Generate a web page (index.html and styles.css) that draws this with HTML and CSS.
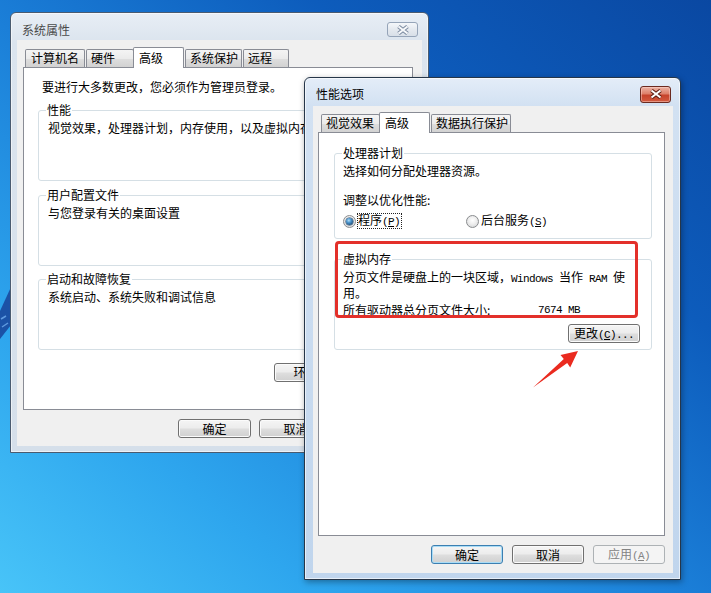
FILE: index.html
```html
<!DOCTYPE html>
<html lang="zh-CN">
<head>
<meta charset="utf-8">
<title>性能选项</title>
<link rel="stylesheet" href="styles.css">
</head>
<body>
<div class="desktop">
  <svg class="logo-piece" width="12" height="60" viewBox="0 0 12 60">
    <polygon points="0,28 11,4 11,42 0,56" fill="#1b52a6"/>
    <path d="M1 36 L6 33 M2 44 L8 40" stroke="#5f9be0" stroke-width="1.5"/>
  </svg>

  <div class="win win-back">
    <div class="titlebar">
      <span class="title">系统属性</span>
      <span class="close close-inactive">
        <svg width="14" height="10" viewBox="0 0 14 10"><path d="M2.5 1.5 L11.5 8.5 M11.5 1.5 L2.5 8.5" stroke="#7d8ca2" stroke-width="4"/><path d="M2.5 1.5 L11.5 8.5 M11.5 1.5 L2.5 8.5" stroke="#f7f9fb" stroke-width="2"/></svg>
      </span>
    </div>
    <div class="client">
      <div class="tabs tabs-back">
        <div class="tab w60 first">计算机名</div>
        <div class="tab w48">硬件</div>
        <div class="tab sel">高级</div>
        <div class="tab w57">系统保护</div>
        <div class="tab w46">远程</div>
      </div>
      <div class="panel panel-back">
        <div class="line intro">要进行大多数更改，您必须作为管理员登录。</div>
        <div class="group bg bg1">
          <div class="glabel">性能</div>
          <div class="line gtext">视觉效果，处理器计划，内存使用，以及虚拟内存</div>
        </div>
        <div class="group bg bg2">
          <div class="glabel">用户配置文件</div>
          <div class="line gtext">与您登录有关的桌面设置</div>
        </div>
        <div class="group bg bg3">
          <div class="glabel">启动和故障恢复</div>
          <div class="line gtext">系统启动、系统失败和调试信息</div>
        </div>
        <div class="envrow"><button class="btn env">环境变量<span class="m">(<u>N</u>)...</span></button></div>
      </div>
      <div class="btnbar bar-back">
        <button class="btn">确定</button>
        <button class="btn">取消</button>
        <button class="btn">应用<span class="m">(<u>A</u>)</span></button>
      </div>
    </div>
  </div>

  <div class="win win-front">
    <div class="titlebar">
      <span class="title">性能选项</span>
      <span class="close close-active">
        <svg width="14" height="10" viewBox="0 0 14 10"><path d="M2.5 1.5 L11.5 8.5 M11.5 1.5 L2.5 8.5" stroke="#5b1c12" stroke-width="4"/><path d="M2.5 1.5 L11.5 8.5 M11.5 1.5 L2.5 8.5" stroke="#ffffff" stroke-width="2"/></svg>
      </span>
    </div>
    <div class="client">
      <div class="tabs tabs-front">
        <div class="tab w59 first">视觉效果</div>
        <div class="tab sel">高级</div>
        <div class="tab w80">数据执行保护</div>
      </div>
      <div class="panel panel-front">
        <div class="group fg1">
          <div class="glabel">处理器计划</div>
          <div class="line gtext">选择如何分配处理器资源。</div>
          <div class="line gtext adjust">调整以优化性能:</div>
          <div class="radios">
            <div class="radio-item ri1"><span class="radio on"></span><span class="rlabel focus">程序<span class="m">(<u>P</u>)</span></span></div>
            <div class="radio-item"><span class="radio"></span><span class="rlabel">后台服务<span class="m">(<u>S</u>)</span></span></div>
          </div>
        </div>
        <div class="group fg2">
          <div class="glabel">虚拟内存</div>
          <div class="gtext para">分页文件是硬盘上的一块区域，<span class="m">Windows </span>当作<span class="m"> RAM </span>使用。</div>
          <div class="line gtext size-row"><span class="size-label">所有驱动器总分页文件大小:</span><span class="m">7674 MB</span></div>
          <div class="changerow"><button class="btn">更改<span class="m">(<u>C</u>)...</span></button></div>
        </div>
      </div>
      <div class="btnbar bar-front">
        <button class="btn default">确定</button>
        <button class="btn">取消</button>
        <button class="btn disabled">应用<span class="m">(<u>A</u>)</span></button>
      </div>
    </div>
  </div>

  <div class="redbox"></div>
  <svg class="arrow" width="711" height="593" viewBox="0 0 711 593">
    <polygon points="578,351 560.5,355 563.8,359 533,387.5 567.2,363 570.2,367.5" fill="#ea2a1f"/>
  </svg>
</div>
</body>
</html>
```

FILE: styles.css
```css
* { box-sizing: border-box; }

html, body {
  margin: 0;
  padding: 0;
}

body {
  font-family: "Noto Sans CJK SC", "Noto Sans", sans-serif;
  font-size: 12px;
  color: #000;
}

.desktop {
  position: relative;
  width: 711px;
  height: 593px;
  overflow: hidden;
  background: linear-gradient(to bottom left, #0a48a2 0%, #0d5cbc 28%, #1b7fd8 52%, #2ea6ee 78%, #48c4f8 100%);
}

.logo-piece {
  position: absolute;
  left: 0;
  top: 283px;
}

/* ---------- windows ---------- */
.win {
  position: absolute;
  display: flex;
  flex-direction: column;
  border-radius: 6px 6px 0 0;
}

.win-back {
  left: 10px;
  top: 12px;
  width: 419px;
  height: 441px;
  padding: 0 6px 6px 6px;
  border: 1px solid #4a5b70;
  background: linear-gradient(#e8eef5, #dbe4ee 30px, #d5dfea);
  box-shadow: inset 0 0 0 1px rgba(255, 255, 255, 0.55);
}

.win-front {
  left: 304px;
  top: 77px;
  width: 377px;
  height: 503px;
  padding: 0 7px 6px 8px;
  border: 1px solid #263649;
  background: linear-gradient(#e4edf8, #d2e1f2 28px, #c0d5ed);
  box-shadow: inset 0 0 0 1px rgba(255, 255, 255, 0.6), 1px 2px 6px rgba(0, 0, 0, 0.35);
}

.titlebar {
  flex: none;
  display: flex;
  align-items: center;
  justify-content: space-between;
}

.win-back .titlebar {
  height: 27px;
  padding: 6px 4px 0 5px;
}

.win-front .titlebar {
  height: 28px;
  padding: 4px 2px 0 3px;
}

.title {
  line-height: 14px;
  white-space: nowrap;
}

.win-back .title { color: #4a4a4a; }

.close {
  width: 31px;
  display: flex;
  align-items: center;
  justify-content: center;
  border-radius: 3px;
}

.close-inactive {
  height: 15px;
  border: 1px solid #95a4b8;
  background: linear-gradient(#f4f7fa, #e4e9ef 50%, #d8dfe8);
}

.close-active {
  height: 17px;
  border: 1px solid #6b2a20;
  background: linear-gradient(#ecb3a4 0%, #de806a 45%, #c6432b 55%, #d35b40 100%);
  box-shadow: inset 0 0 0 1px rgba(255, 220, 210, 0.45);
}

.client {
  flex: 1;
  display: flex;
  flex-direction: column;
  background: #f0f0f0;
  min-height: 0;
}

.win-back .client { padding: 7px 9px 8px 6px; }
.win-front .client { padding: 6px 8px 9px 5px; }

/* ---------- tabs ---------- */
.tabs {
  flex: none;
  display: flex;
  height: 20px;
  position: relative;
  z-index: 1;
}

.tab {
  height: 18px;
  margin-top: 2px;
  margin-right: 1px;
  padding: 0 0 0 4px;
  border: 1px solid #898c95;
  border-bottom: none;
  border-radius: 2px 2px 0 0;
  background: linear-gradient(#f4f4f4, #ebebeb 50%, #dedede 51%, #d2d2d2);
  line-height: 16px;
  white-space: nowrap;
  overflow: hidden;
}

.tabs-back .first { margin-left: 2px; }
.tabs-front .first { margin-left: 3px; }

.tab.sel {
  width: 51px;
  height: 21px;
  margin-top: 0;
  margin-left: -2px;
  margin-right: 1px;
  padding-left: 5px;
  background: #fff;
  line-height: 19px;
  position: relative;
  z-index: 2;
}

.w46 { width: 46px; }
.w48 { width: 48px; }
.w57 { width: 57px; }
.w59 { width: 59px; }
.w60 { width: 60px; }
.w80 { width: 80px; }

.tabs-back .w60 { padding-left: 5px; }

/* ---------- panels ---------- */
.panel {
  flex: 1;
  background: #fff;
  border: 1px solid #898c95;
  min-height: 0;
}

.panel-back { padding: 12px 15px 0 14px; }
.panel-front { padding: 20px 12px 0 15px; }

.line {
  line-height: 14px;
  white-space: nowrap;
}

.intro { margin-left: 4px; }

.group {
  border: 1px solid #d5dfe5;
  border-radius: 3px;
  padding: 0 8px;
}

.glabel {
  width: fit-content;
  margin: -8px 0 0 -1px;
  padding: 0 1px;
  background: #fff;
  line-height: 14px;
  white-space: nowrap;
}

.gtext { margin-top: 4px; }

.bg { height: 71px; }
.bg .gtext { margin-left: 1px; }
.bg1 { margin-top: 16px; }
.bg2 { margin-top: 14px; }
.bg3 { margin-top: 13px; }

.envrow {
  display: flex;
  justify-content: flex-end;
  margin-top: 13px;
}

.fg1 { height: 86px; }
.fg2 { height: 91px; margin-top: 20px; }

.adjust { margin-top: 15px; }

.radios {
  display: flex;
  align-items: center;
  height: 14px;
  margin-top: 7px;
}

.radio-item {
  display: flex;
  align-items: center;
  gap: 1px;
}

.ri1 { width: 123px; }

.radio {
  flex: none;
  width: 13px;
  height: 13px;
  border-radius: 50%;
  border: 1px solid #8a8c8e;
  background: radial-gradient(circle at 50% 40%, #ffffff 0%, #eeeeee 45%, #cfd1d3 100%);
  display: flex;
  align-items: center;
  justify-content: center;
}

.radio.on::after {
  content: "";
  width: 7px;
  height: 7px;
  border-radius: 50%;
  background: radial-gradient(circle at 40% 35%, #b4def7 0%, #4d97cf 35%, #17426c 85%);
  box-shadow: 0 0 0 0.5px #1f3f5f;
}

.rlabel {
  border: 1px solid transparent;
  line-height: 12px;
  padding-right: 1px;
  white-space: nowrap;
}

.rlabel.focus { border: 1px dotted #222; }

.para {
  max-width: 290px;
  line-height: 13px;
}

.size-row {
  display: flex;
}

.size-label {
  width: 195px;
  flex: none;
}

.changerow {
  display: flex;
  justify-content: flex-end;
  margin-top: 7px;
  margin-right: 3px;
}

.m {
  font-family: "Liberation Mono", "DejaVu Sans Mono", monospace;
  font-size: 11px;
  letter-spacing: -0.6px;
  white-space: pre;
}

/* ---------- buttons ---------- */
.btn {
  width: 72px;
  height: 19px;
  padding: 0;
  border: 1px solid #707070;
  border-radius: 3px;
  background: linear-gradient(#f5f5f5 0%, #ececec 48%, #dedede 52%, #d0d0d0 100%);
  box-shadow: inset 0 0 0 1px #fbfbfb;
  font-family: "Noto Sans CJK SC", "Noto Sans", sans-serif;
  font-size: 12px;
  line-height: 16px;
  color: #000;
  text-align: center;
  white-space: nowrap;
}

.btn.env { width: 123px; }

.btn.default {
  border-color: #3c7fb1;
  box-shadow: inset 0 0 0 1px #a9dcf6;
}

.btn.disabled {
  border-color: #adb2b5;
  background: #f4f4f4;
  box-shadow: none;
  color: #838383;
}

.btnbar {
  flex: none;
  display: flex;
  justify-content: flex-end;
  margin-top: 9px;
}

.bar-back { gap: 8px; }
.bar-back .btn { width: 73px; }
.bar-front { gap: 9px; }

/* ---------- annotations ---------- */
.redbox {
  position: absolute;
  left: 335px;
  top: 241px;
  width: 303px;
  height: 77px;
  border: 3px solid #e3302a;
  border-radius: 4px;
}

.arrow {
  position: absolute;
  left: 0;
  top: 0;
}
```
